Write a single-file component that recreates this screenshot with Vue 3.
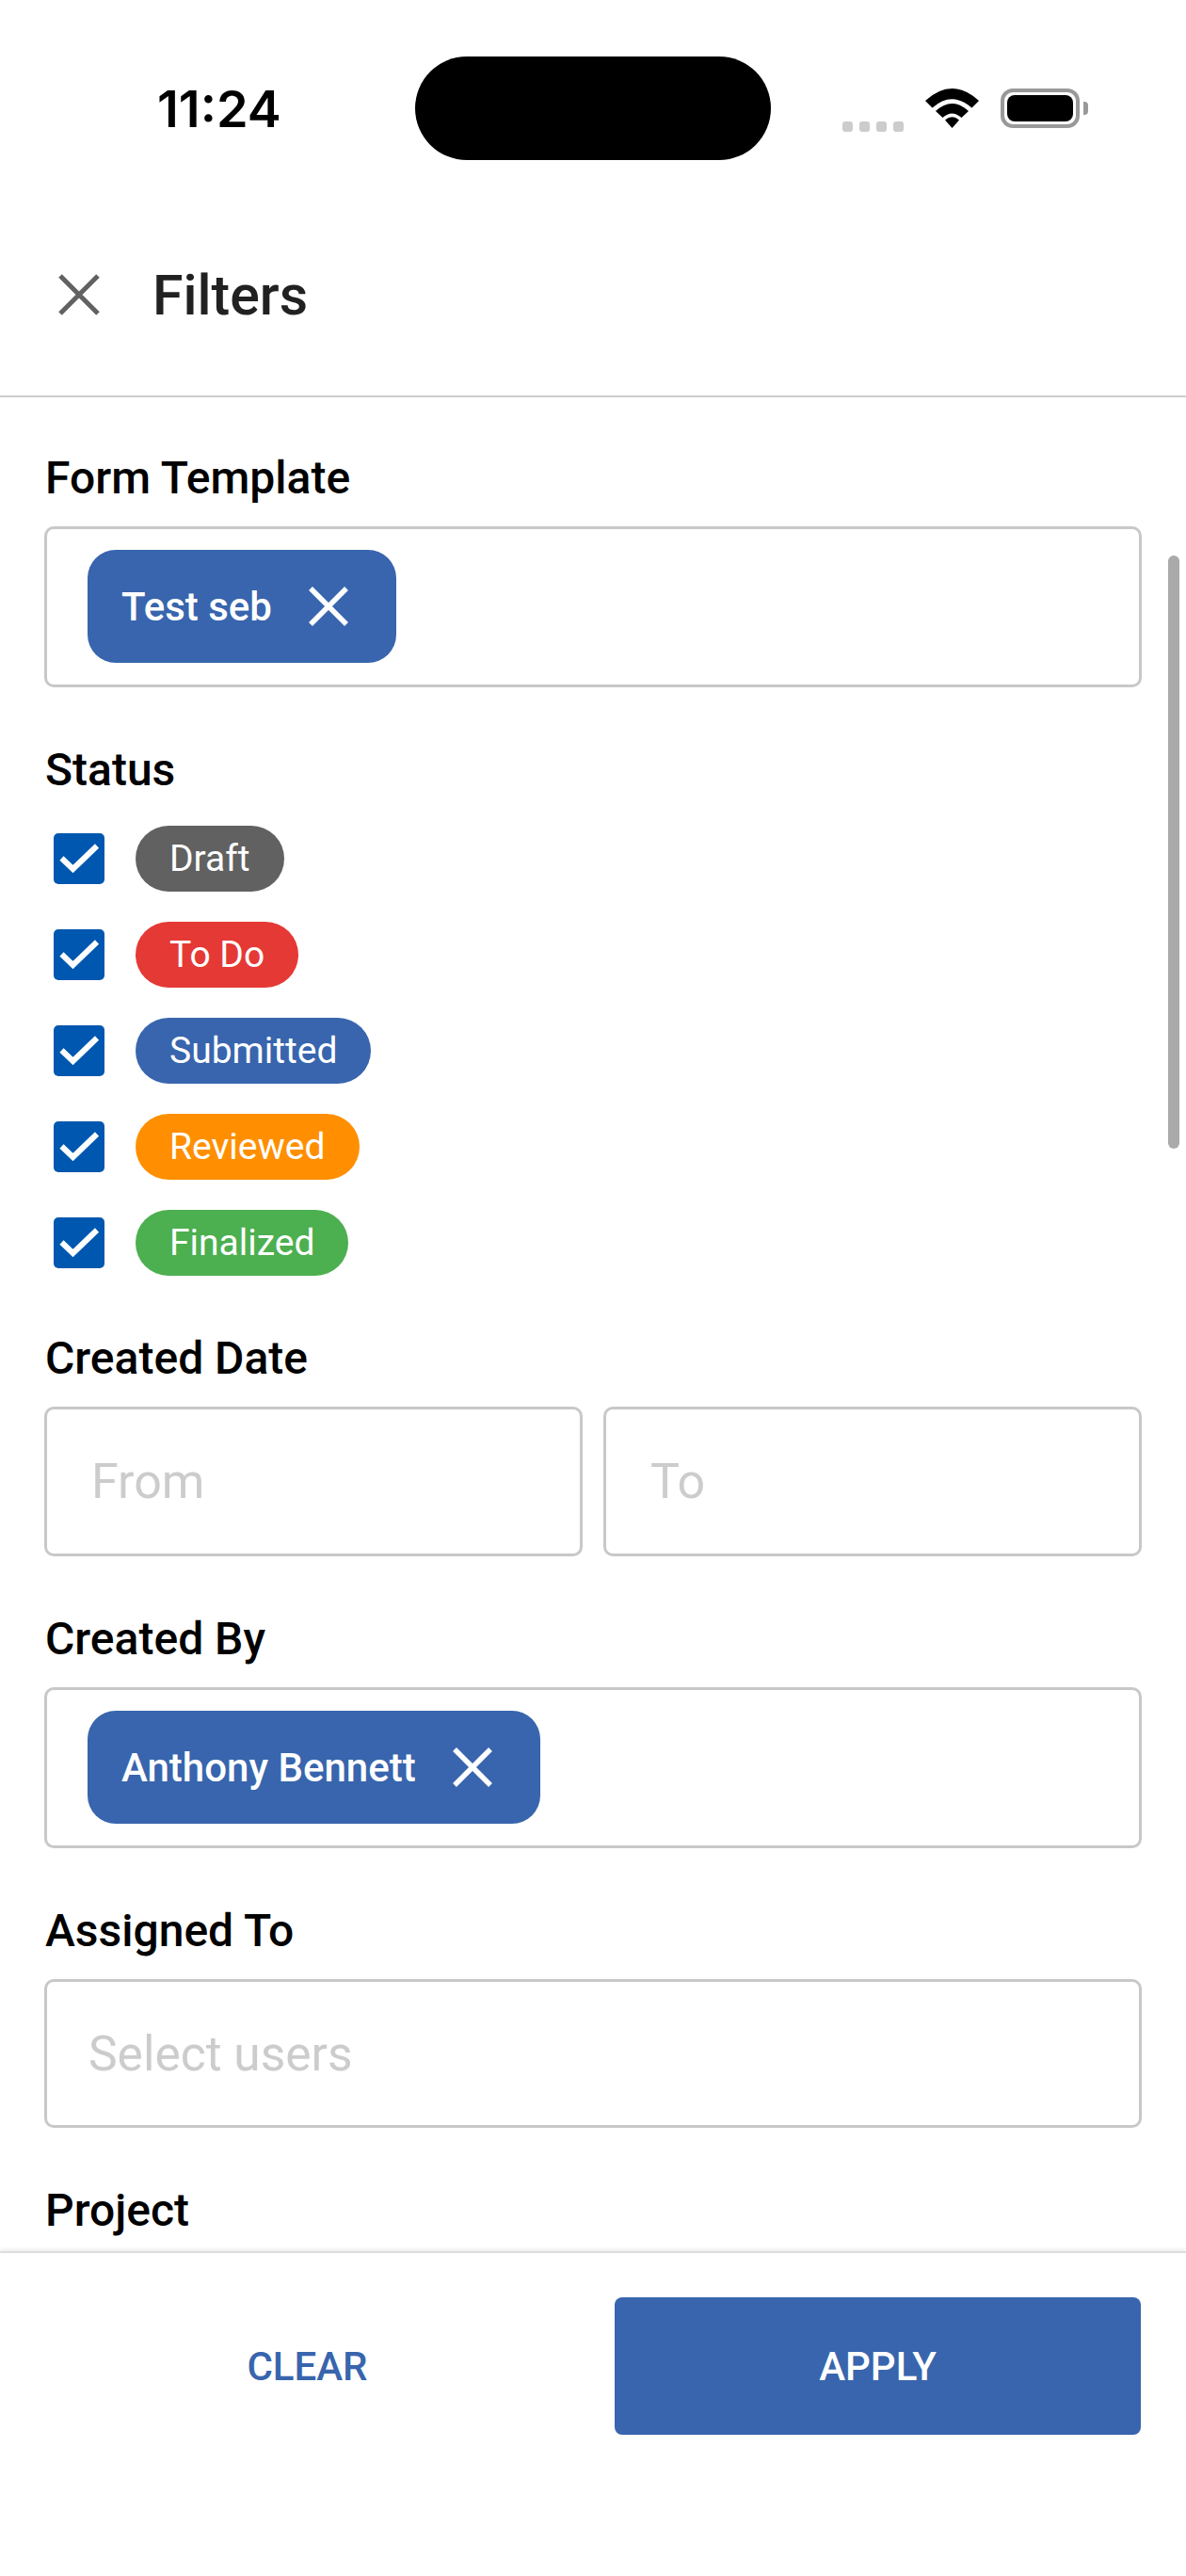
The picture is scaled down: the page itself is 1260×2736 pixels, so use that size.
<template>
  <div class="screen">
    <!-- iOS status bar -->
    <div class="status-bar">
      <span class="time">11:24</span>
      <div class="island"></div>
      <div class="signal">
        <i v-for="n in 4" :key="n"></i>
      </div>
      <svg class="wifi" viewBox="0 0 57 42" width="57" height="42">
        <path d="M0 13Q28.5-13 57 13L49.5 20.5Q28.5 2 7.5 20.5Z" />
        <path d="M11 24Q28.5 8 46 24L38.5 31Q28.5 22 18.5 31Z" />
        <path d="M21 33.5Q28.5 27 36 33.5L28.5 42Z" />
      </svg>
      <div class="battery"><div class="battery-level"></div></div>
      <div class="battery-nub"></div>
    </div>

    <div class="header">
      <svg class="close" viewBox="0 0 44 44" width="44" height="44">
        <path d="M2 2L42 42M42 2L2 42" />
      </svg>
      <h1>Filters</h1>
    </div>

    <div class="body">
      <div class="scrollbar"></div>

      <section>
        <label>Form Template</label>
        <div class="chip-box">
          <span class="chip">
            Test seb
            <svg viewBox="0 0 42 42" width="42" height="42"><path d="M2 2L40 40M40 2L2 40" /></svg>
          </span>
        </div>
      </section>

      <section>
        <label>Status</label>
        <div class="status-list">
          <div v-for="s in statuses" :key="s.name" class="status-row">
            <span class="checkbox">
              <svg viewBox="0 0 54 54" width="54" height="54"><path d="M8.5 26.5L20.5 38L46 13.5" /></svg>
            </span>
            <span class="pill" :style="{ background: s.color }">{{ s.name }}</span>
          </div>
        </div>
      </section>

      <section>
        <label>Created Date</label>
        <div class="date-row">
          <div class="field date">From</div>
          <div class="field date">To</div>
        </div>
      </section>

      <section>
        <label>Created By</label>
        <div class="chip-box">
          <span class="chip">
            Anthony Bennett
            <svg viewBox="0 0 42 42" width="42" height="42"><path d="M2 2L40 40M40 2L2 40" /></svg>
          </span>
        </div>
      </section>

      <section>
        <label>Assigned To</label>
        <div class="field">Select users</div>
      </section>

      <section>
        <label>Project</label>
      </section>
    </div>

    <div class="footer">
      <button class="btn-clear">CLEAR</button>
      <button class="btn-apply">APPLY</button>
    </div>
  </div>
</template>

<script setup>
const statuses = [
  { name: 'Draft', color: '#616161' },
  { name: 'To Do', color: '#e53935' },
  { name: 'Submitted', color: '#3865ad' },
  { name: 'Reviewed', color: '#ff8f00' },
  { name: 'Finalized', color: '#4caf50' },
];
</script>

<style>
html, body {
  margin: 0;
  background: #fff;
}
</style>

<style scoped>
.screen {
  width: 1260px;
  height: 2736px;
  display: flex;
  flex-direction: column;
  background: #fff;
  font-family: Roboto, "Liberation Sans", sans-serif;
  overflow: hidden;
}

.status-bar {
  display: flex;
  align-items: center;
  height: 110px;
  padding: 60px 0 40px 167px;
  flex: none;
}

.time {
  width: 274px;
  font-family: Inter, Roboto, sans-serif;
  font-size: 54px;
  font-weight: 600;
  color: #000;
}

.island {
  width: 378px;
  height: 110px;
  border-radius: 55px;
  background: #000;
}

.signal {
  display: flex;
  gap: 7px;
  margin: 39px 0 0 76px;
}

.signal i {
  width: 11px;
  height: 11px;
  border-radius: 3px;
  background: #ccc;
}

.wifi {
  margin-left: 23px;
  fill: #000;
}

.battery {
  margin-left: 23px;
  width: 84px;
  height: 42px;
  box-sizing: border-box;
  border: 4px solid #999;
  border-radius: 13px;
  padding: 3px;
}

.battery-level {
  height: 100%;
  border-radius: 8px;
  background: #000;
}

.battery-nub {
  width: 5px;
  height: 14px;
  margin-left: 4px;
  border-radius: 0 4px 4px 0;
  background: #999;
}

.header {
  flex: none;
  height: 212px;
  box-sizing: border-box;
  display: flex;
  align-items: center;
  padding: 0 0 4px 62px;
  border-bottom: 2px solid #ccc;
}

.close {
  fill: none;
  stroke: #616161;
  stroke-width: 5;
}

.header h1 {
  margin: 0 0 0 56px;
  font-size: 59px;
  font-weight: 500;
  color: #212121;
}

.body {
  flex: 1;
  min-height: 0;
  position: relative;
  overflow: hidden;
  padding: 56px 47px 0 48px;
}

.scrollbar {
  position: absolute;
  top: 168px;
  right: 7px;
  width: 12px;
  height: 630px;
  border-radius: 6px;
  background: #aaa;
}

section + section {
  margin-top: 58px;
}

label {
  display: block;
  font-size: 48px;
  font-weight: 500;
  line-height: 60px;
  color: #000;
  margin-bottom: 21px;
}

.chip-box {
  height: 171px;
  box-sizing: border-box;
  margin-left: -1px;
  padding: 22px 43px;
  border: 3px solid #c8c8c8;
  border-radius: 10px;
}

.chip {
  display: inline-flex;
  align-items: center;
  gap: 39px;
  height: 120px;
  padding: 0 51px 0 36px;
  border-radius: 30px;
  background: #3865ad;
  color: #fff;
  font-size: 42px;
  font-weight: 500;
}

.chip svg {
  fill: none;
  stroke: #fff;
  stroke-width: 5.5;
}

.status-list {
  display: flex;
  flex-direction: column;
  gap: 32px;
  margin: 29px 0 3px;
}

.status-row {
  display: flex;
  align-items: center;
  height: 70px;
  padding-left: 9px;
}

.checkbox {
  width: 54px;
  height: 54px;
  border-radius: 5px;
  background: #0057b0;
}

.checkbox svg {
  display: block;
  fill: none;
  stroke: #fff;
  stroke-width: 6;
}

.pill {
  margin-left: 33px;
  height: 70px;
  line-height: 70px;
  padding: 0 36px;
  border-radius: 35px;
  color: #fff;
  font-size: 39px;
}

.date-row {
  display: flex;
  gap: 22px;
  margin-left: -1px;
}

.field {
  height: 158px;
  box-sizing: border-box;
  margin-left: -1px;
  padding-left: 44px;
  display: flex;
  align-items: center;
  border: 3px solid #c8c8c8;
  border-radius: 10px;
  color: #ccc;
  font-size: 51.5px;
}

.date {
  flex: 1;
  height: 159px;
  margin-left: 0;
  padding-left: 47px;
  font-size: 52px;
}

.footer {
  flex: none;
  height: 345px;
  box-sizing: border-box;
  display: flex;
  gap: 47px;
  padding: 47px 48px 0 47px;
  border-top: 2px solid #ddd;
  box-shadow: 0 -2px 4px rgba(0, 0, 0, 0.08);
  background: #fff;
  position: relative;
}

.footer button {
  flex: 1;
  height: 146px;
  border: none;
  border-radius: 8px;
  font-family: inherit;
  font-size: 42px;
  font-weight: 500;
}

.btn-clear {
  background: none;
  color: #3865ad;
}

.btn-apply {
  background: #3865ad;
  color: #fff;
}
</style>
